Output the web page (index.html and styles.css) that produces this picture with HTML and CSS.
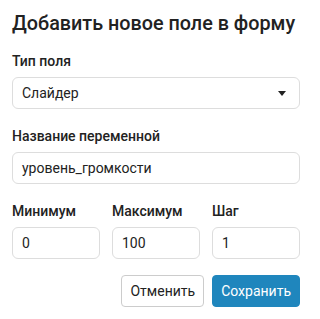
FILE: index.html
```html
<!DOCTYPE html>
<html lang="ru">
<head>
<meta charset="utf-8">
<link rel="stylesheet" href="styles.css">
</head>
<body>
<div class="dialog">
  <h2 class="title">Добавить новое поле в форму</h2>
  <div class="field">
    <label class="label">Тип поля</label>
    <div class="select">
      <span>Слайдер</span>
      <svg class="caret" width="8" height="5" viewBox="0 0 8 5"><path d="M0 0H8L4 5Z" fill="#222"/></svg>
    </div>
  </div>
  <div class="field">
    <label class="label">Название переменной</label>
    <div class="input">уровень_громкости</div>
  </div>
  <div class="row">
    <div class="field">
      <label class="label">Минимум</label>
      <div class="input">0</div>
    </div>
    <div class="field">
      <label class="label">Максимум</label>
      <div class="input">100</div>
    </div>
    <div class="field">
      <label class="label">Шаг</label>
      <div class="input">1</div>
    </div>
  </div>
  <div class="actions">
    <button class="btn btn-cancel">Отменить</button>
    <button class="btn btn-save">Сохранить</button>
  </div>
</div>
</body>
</html>
```
FILE: styles.css
```css
* { box-sizing: border-box; }
body {
  margin: 0;
  background: #fff;
  font-family: Roboto, "Noto Sans", sans-serif;
  color: #222;
}
.dialog {
  width: 312px;
  padding: 12px;
  display: flex;
  flex-direction: column;
}
.title {
  margin: 0 0 17px;
  font-size: 19.8px;
  line-height: 24px;
  font-weight: 500;
  color: #222;
}
.field {
  display: flex;
  flex-direction: column;
  margin-bottom: 19px;
}
.label {
  font-size: 14px;
  line-height: 16px;
  font-weight: 500;
  margin-bottom: 8px;
  color: #222;
}
.select, .input {
  height: 32px;
  border: 1px solid #ddd;
  border-radius: 6px;
  padding: 0 9px;
  font-size: 14px;
  display: flex;
  align-items: center;
  color: #222;
}
.select { justify-content: space-between; padding-right: 13px; }
.row {
  display: grid;
  grid-template-columns: 1fr 1fr 1fr;
  column-gap: 12px;
}
.row .field { margin-bottom: 16px; }
.actions {
  display: flex;
  justify-content: flex-end;
  gap: 8px;
}
.btn {
  height: 32px;
  padding: 0 8px;
  border-radius: 4px;
  font-family: Roboto, sans-serif;
  font-size: 14px;
}
.btn-cancel {
  background: #fff;
  border: 1px solid #ccc;
  color: #222;
}
.btn-save {
  background: #1f86bd;
  border: 1px solid #1f86bd;
  color: #fff;
}
```
